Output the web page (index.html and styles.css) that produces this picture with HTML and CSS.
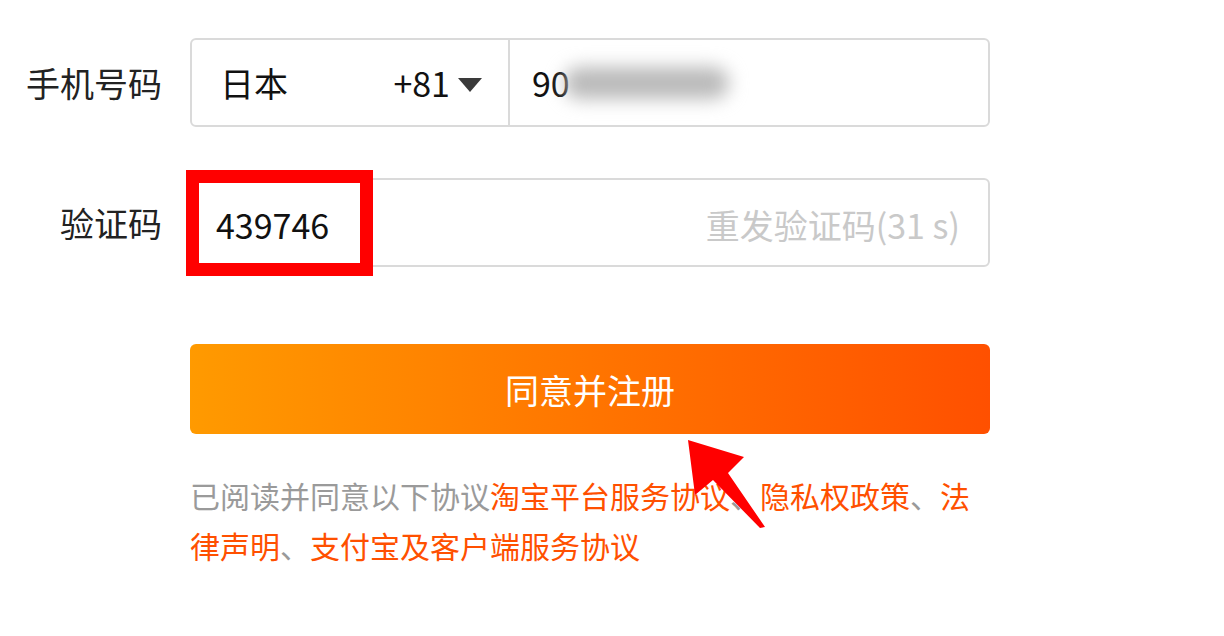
FILE: index.html
```html
<!DOCTYPE html>
<html lang="zh-CN">
<head>
    <meta charset="UTF-8">
    <meta name="viewport" content="width=device-width, initial-scale=1.0">
    <title>注册</title>
    <link rel="stylesheet" href="styles.css">
</head>
<body>

    <div class="page">
        <!-- 手机号 -->
        <div class="row row-phone">
            <label class="label">手机号码</label>
            <div class="field phone-field">
                <div class="country">
                    <span class="country-name">日本</span>
                    <span class="country-code">+81<span class="caret"></span></span>
                </div>
                <div class="number">
                    <span>90</span><span class="masked"></span>
                </div>
            </div>
        </div>

        <!-- 验证码 -->
        <div class="row row-code">
            <label class="label">验证码</label>
            <div class="field code-field">
                <span class="code-value">439746</span>
                <span class="resend">重发验证码(31 s)</span>
                <div class="highlight"></div>
            </div>
        </div>

        <!-- 提交 -->
        <div class="row row-submit">
            <span></span>
            <button class="submit-btn">同意并注册</button>
        </div>

        <div class="row row-agree">
            <span></span>
            <p class="agree">已阅读并同意以下协议<a href="#">淘宝平台服务协议</a>、<a href="#">隐私权政策</a>、<a href="#">法律声明</a>、<a href="#">支付宝及客户端服务协议</a></p>
        </div>

        <svg class="pointer" width="100" height="110" viewBox="0 0 100 110">
            <polygon points="8,10 64,27 48,43 85,97 80,98 33,50 15,65" fill="#ff0000"/>
        </svg>
    </div>

</body>
</html>
```

FILE: styles.css
```css
body {
    margin: 0;
    background: #fff;
    font-family: "Noto Sans CJK SC", "Liberation Sans", sans-serif;
    color: #111;
}

.page {
    position: relative;
    width: 1224px;
    height: 636px;
    padding-top: 38px;
    box-sizing: border-box;
}

.row {
    display: grid;
    grid-template-columns: 162px 800px;
    column-gap: 28px;
    align-items: center;
}

.label {
    font-size: 34px;
    text-align: right;
    color: #222;
    margin-left: -3px;
}

.field {
    height: 89px;
    box-sizing: border-box;
    border: 2px solid #dadada;
    border-radius: 6px;
    display: flex;
    align-items: center;
    font-size: 34px;
}

/* 手机号 */
.phone-field {
    align-items: stretch;
}

.country {
    width: 318px;
    box-sizing: border-box;
    border-right: 2px solid #dadada;
    padding: 0 26px 0 28px;
    display: flex;
    align-items: center;
    justify-content: space-between;
}

.country-code {
    display: flex;
    align-items: center;
}

.caret {
    width: 0;
    height: 0;
    margin-left: 8px;
    margin-top: 4px;
    border-left: 12px solid transparent;
    border-right: 12px solid transparent;
    border-top: 14px solid #3a3a3a;
}

.number {
    padding-left: 22px;
    display: flex;
    align-items: center;
}

.masked {
    display: inline-block;
    width: 165px;
    height: 32px;
    margin-left: -6px;
    border-radius: 16px;
    background: #bababa;
    filter: blur(9px);
}

/* 验证码 */
.row-code {
    margin-top: 51px;
}

.code-field {
    position: relative;
    justify-content: space-between;
    padding: 4px 28px 0 24px;
}

.resend {
    font-size: 34px;
    color: #c9c9c9;
}

.highlight {
    position: absolute;
    left: -6px;
    top: -10px;
    width: 187px;
    height: 106px;
    box-sizing: border-box;
    border: 13px solid #ff0000;
}

/* 提交 */
.row-submit {
    margin-top: 77px;
}

.submit-btn {
    height: 90px;
    border: none;
    border-radius: 6px;
    background: linear-gradient(90deg, #ff9a00, #ff5000);
    color: #fff;
    font-family: inherit;
    font-size: 34px;
}

.row-agree {
    margin-top: 36px;
}

.agree {
    margin: 0;
    font-size: 30px;
    line-height: 50px;
    color: #9a9a9a;
    text-spacing-trim: space-all;
}

.agree a {
    color: #ff5000;
    text-decoration: none;
}

.pointer {
    position: absolute;
    left: 680px;
    top: 430px;
}
```
